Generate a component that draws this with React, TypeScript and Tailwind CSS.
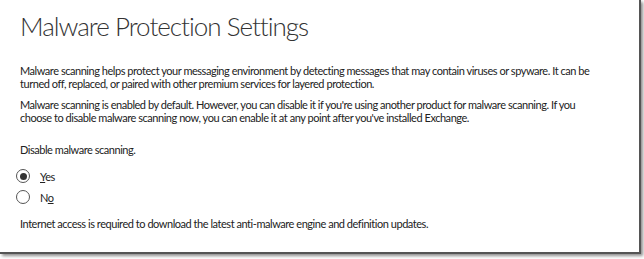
import React from "react";

function Radio({ checked }: { checked?: boolean }) {
  return (
    <span className="flex h-[14px] w-[14px] items-center justify-center rounded-full border border-[#555] bg-white">
      {checked && <span className="h-[7px] w-[7px] rounded-full bg-[#333]" />}
    </span>
  );
}

export default function App() {
  return (
    <div className="h-[259px] w-[644px] bg-white">
      <div className="h-[254px] w-[641px] border-r-2 border-b-2 border-[#555] shadow-[2px_2px_3px_rgba(0,0,0,0.45)] bg-white px-[20px] pt-[6px] font-['Lato',sans-serif] text-[#222]">
        <h1 className="font-light text-[26px] leading-[40px] tracking-[-1px] text-[#333]">
          Malware Protection Settings
        </h1>
        <div className="mt-[18px] whitespace-nowrap text-[11px] leading-[13px] tracking-[-0.46px]">
          <p>
            Malware scanning helps protect your messaging environment by detecting messages that may contain viruses or spyware. It can be
            <br />
            turned off, replaced, or paired with other premium services for layered protection.
          </p>
          <p className="mt-[8px]">
            Malware scanning is enabled by default. However, you can disable it if you're using another product for malware scanning. If you
            <br />
            choose to disable malware scanning now, you can enable it at any point after you've installed Exchange.
          </p>
          <p className="mt-[19px]">Disable malware scanning.</p>
          <div className="mt-[13px] flex flex-col gap-[7px]">
            <label className="-ml-[4px] flex items-center gap-[10px]">
              <Radio checked />
              <span><span className="underline">Y</span>es</span>
            </label>
            <label className="-ml-[4px] flex items-center gap-[10px]">
              <Radio />
              <span>N<span className="underline">o</span></span>
            </label>
          </div>
          <p className="mt-[13px]">
            Internet access is required to download the latest anti-malware engine and definition updates.
          </p>
        </div>
      </div>
    </div>
  );
}
